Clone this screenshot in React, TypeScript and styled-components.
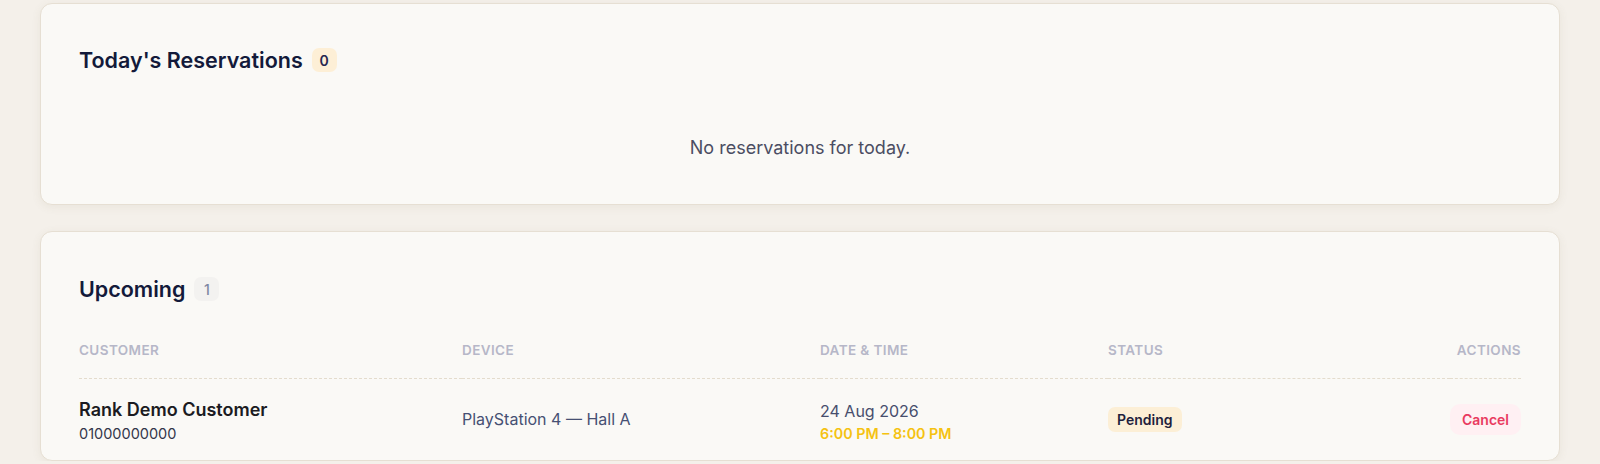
import styled, { createGlobalStyle } from "styled-components";

const GlobalStyle = createGlobalStyle`
  html, body {
    margin: 0;
    padding: 0;
    background: #f4f0ea;
    font-family: Inter, "Noto Sans", sans-serif;
    -webkit-font-smoothing: antialiased;
  }
`;

interface Reservation {
  customer: string;
  phone: string;
  device: string;
  date: string;
  time: string;
  status: string;
}

const upcoming: Reservation[] = [
  {
    customer: "Rank Demo Customer",
    phone: "01000000000",
    device: "PlayStation 4 — Hall A",
    date: "24 Aug 2026",
    time: "6:00 PM – 8:00 PM",
    status: "Pending",
  },
];

const App = () => {
  return (
    <Page>
      <GlobalStyle />
      <Card>
        <CardHeader>
          <CardTitle>Today's Reservations</CardTitle>
          <CountBadge tone="warm">0</CountBadge>
        </CardHeader>
        <EmptyState>No reservations for today.</EmptyState>
      </Card>

      <Card compact>
        <CardHeader>
          <CardTitle>Upcoming</CardTitle>
          <CountBadge tone="muted">{upcoming.length}</CountBadge>
        </CardHeader>

        <Table>
          <HeadCell>Customer</HeadCell>
          <HeadCell>Device</HeadCell>
          <HeadCell>Date &amp; Time</HeadCell>
          <HeadCell>Status</HeadCell>
          <HeadCell align="right">Actions</HeadCell>

          {upcoming.map((r) => (
            <Row key={r.customer}>
              <Cell>
                <CustomerName>{r.customer}</CustomerName>
                <Phone>{r.phone}</Phone>
              </Cell>
              <Cell>
                <Device>{r.device}</Device>
              </Cell>
              <Cell>
                <DateText>{r.date}</DateText>
                <TimeText>{r.time}</TimeText>
              </Cell>
              <Cell>
                <StatusPill>{r.status}</StatusPill>
              </Cell>
              <Cell align="right">
                <CancelButton>Cancel</CancelButton>
              </Cell>
            </Row>
          ))}
        </Table>
      </Card>
    </Page>
  );
};

const Page = styled.div`
  padding: 3px 40px 0;
  display: flex;
  flex-direction: column;
  gap: 26px;
`;

const Card = styled.section<{ compact?: boolean }>`
  background: #faf9f6;
  border: 1px solid #e6dfd3;
  border-radius: 12px;
  box-shadow: 0 2px 10px rgba(120, 100, 70, 0.08);
  padding: ${(p) => (p.compact ? "43px 38px 16px" : "42px 38px 44px")};
`;

const CardHeader = styled.div`
  display: flex;
  align-items: center;
  gap: 9px;
  height: 28px;
`;

const CardTitle = styled.h2`
  margin: 0;
  font-size: 21.5px;
  line-height: 28px;
  font-weight: 600;
  color: #131a3a;
`;

const CountBadge = styled.span<{ tone: "warm" | "muted" }>`
  display: inline-flex;
  align-items: center;
  justify-content: center;
  min-width: 25px;
  height: 24px;
  padding: 0 6px;
  box-sizing: border-box;
  border-radius: 7px;
  font-size: 14px;
  font-weight: ${(p) => (p.tone === "warm" ? 600 : 500)};
  background: ${(p) => (p.tone === "warm" ? "#fdefd6" : "#f3f2f0")};
  color: ${(p) => (p.tone === "warm" ? "#262650" : "#7d86a3")};
`;

const EmptyState = styled.p`
  margin: 62px 0 0;
  text-align: center;
  font-size: 18px;
  line-height: 24px;
  color: #4b4d62;
`;

const Table = styled.div`
  margin-top: 39px;
  display: grid;
  grid-template-columns: 383px 358px 288px 1fr auto;
`;

const HeadCell = styled.div<{ align?: string }>`
  text-align: ${(p) => p.align || "left"};
  font-size: 13.5px;
  line-height: 16px;
  font-weight: 600;
  letter-spacing: 0.03em;
  text-transform: uppercase;
  color: #b6b7c8;
  padding-bottom: 20px;
  border-bottom: 1px dashed #e4dccd;
`;

const Row = styled.div`
  display: contents;
`;

const Cell = styled.div<{ align?: string }>`
  display: flex;
  flex-direction: column;
  justify-content: center;
  align-items: ${(p) => (p.align === "right" ? "flex-end" : "flex-start")};
  padding: 20px 0 0;
`;

const CustomerName = styled.div`
  font-size: 18px;
  line-height: 22px;
  font-weight: 600;
  color: #1b1b22;
`;

const Phone = styled.div`
  margin-top: 3px;
  font-size: 14.5px;
  line-height: 20px;
  color: #33364a;
`;

const Device = styled.div`
  margin-top: -5px;
  font-size: 16px;
  line-height: 22px;
  color: #465073;
`;

const DateText = styled.div`
  font-size: 16px;
  line-height: 22px;
  color: #474e6d;
`;

const TimeText = styled.div`
  margin-top: 2px;
  font-size: 14.3px;
  line-height: 20px;
  font-weight: 600;
  color: #f5c211;
`;

const StatusPill = styled.span`
  display: inline-flex;
  align-items: center;
  height: 25px;
  margin-top: -4px;
  padding: 0 9px;
  border-radius: 7px;
  background: #fcefd6;
  color: #1f1f3d;
  font-size: 14px;
  font-weight: 600;
`;

const CancelButton = styled.button`
  height: 31px;
  margin-top: -5px;
  padding: 0 12px;
  border: none;
  border-radius: 10px;
  background: #fff0f3;
  color: #e93a5f;
  font-family: inherit;
  font-size: 14px;
  font-weight: 600;
  cursor: pointer;
`;

export default App;
